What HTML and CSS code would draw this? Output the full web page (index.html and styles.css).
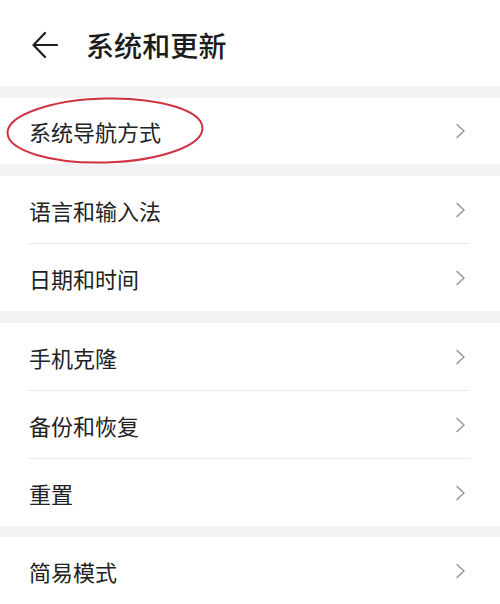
FILE: index.html
```html
<!DOCTYPE html>
<html lang="zh-CN">
<head>
<meta charset="utf-8">
<link rel="stylesheet" href="styles.css">
</head>
<body>
<div class="page">
  <header class="header">
    <svg class="back" width="26" height="28" viewBox="0 0 26 28" aria-hidden="true">
      <path d="M25 14 H2 M13 2 L1.5 14 L13 26" fill="none" stroke="#1f1f1f" stroke-width="2.2" stroke-linecap="round" stroke-linejoin="round"/>
    </svg>
    <h1 class="title">系统和更新</h1>
  </header>

  <div class="gap"></div>
  <section class="group">
    <div class="row row-short">
      <span class="label">系统导航方式</span>
      <svg class="chev" width="11" height="16" viewBox="0 0 11 16"><path d="M2 1.5 L9 8 L2 14.5" fill="none" stroke="#9a9a9a" stroke-width="1.6" stroke-linecap="round" stroke-linejoin="round"/></svg>
      <svg class="circle" width="200" height="70" viewBox="0 0 200 70" aria-hidden="true">
        <ellipse cx="100" cy="34.5" rx="97.5" ry="32" transform="rotate(-1.5 100 34.5)" fill="none" stroke="#cf3240" stroke-width="2"/>
      </svg>
    </div>
  </section>

  <div class="gap"></div>
  <section class="group">
    <div class="row">
      <span class="label">语言和输入法</span>
      <svg class="chev" width="11" height="16" viewBox="0 0 11 16"><path d="M2 1.5 L9 8 L2 14.5" fill="none" stroke="#9a9a9a" stroke-width="1.6" stroke-linecap="round" stroke-linejoin="round"/></svg>
    </div>
    <div class="divider"></div>
    <div class="row">
      <span class="label">日期和时间</span>
      <svg class="chev" width="11" height="16" viewBox="0 0 11 16"><path d="M2 1.5 L9 8 L2 14.5" fill="none" stroke="#9a9a9a" stroke-width="1.6" stroke-linecap="round" stroke-linejoin="round"/></svg>
    </div>
  </section>

  <div class="gap"></div>
  <section class="group">
    <div class="row">
      <span class="label">手机克隆</span>
      <svg class="chev" width="11" height="16" viewBox="0 0 11 16"><path d="M2 1.5 L9 8 L2 14.5" fill="none" stroke="#9a9a9a" stroke-width="1.6" stroke-linecap="round" stroke-linejoin="round"/></svg>
    </div>
    <div class="divider"></div>
    <div class="row">
      <span class="label">备份和恢复</span>
      <svg class="chev" width="11" height="16" viewBox="0 0 11 16"><path d="M2 1.5 L9 8 L2 14.5" fill="none" stroke="#9a9a9a" stroke-width="1.6" stroke-linecap="round" stroke-linejoin="round"/></svg>
    </div>
    <div class="divider"></div>
    <div class="row">
      <span class="label">重置</span>
      <svg class="chev" width="11" height="16" viewBox="0 0 11 16"><path d="M2 1.5 L9 8 L2 14.5" fill="none" stroke="#9a9a9a" stroke-width="1.6" stroke-linecap="round" stroke-linejoin="round"/></svg>
    </div>
  </section>

  <div class="gap gap-small"></div>
  <section class="group">
    <div class="row">
      <span class="label">简易模式</span>
      <svg class="chev" width="11" height="16" viewBox="0 0 11 16"><path d="M2 1.5 L9 8 L2 14.5" fill="none" stroke="#9a9a9a" stroke-width="1.6" stroke-linecap="round" stroke-linejoin="round"/></svg>
    </div>
  </section>
</div>
</body>
</html>
```

FILE: styles.css
```css
html, body {
  margin: 0;
  padding: 0;
  background: #ffffff;
}

body {
  font-family: "Noto Sans CJK SC", "Noto Sans", sans-serif;
  color: #1f1f1f;
  width: 500px;
  height: 604px;
  overflow: hidden;
}

.page {
  display: flex;
  flex-direction: column;
}

.header {
  height: 86px;
  display: flex;
  align-items: center;
  padding: 3px 0 0 32px;
  box-sizing: border-box;
}

.back {
  display: block;
}

.title {
  margin: 0 0 0 28px;
  font-size: 28px;
  font-weight: 500;
  line-height: 1;
  letter-spacing: 0.1px;
  color: #1c1c1c;
}

.gap {
  height: 12px;
  background: #f3f3f3;
}

.gap-small {
  height: 11px;
}

.group {
  background: #ffffff;
}

.row {
  position: relative;
  height: 67px;
  display: flex;
  align-items: center;
  justify-content: space-between;
  padding: 0 34px 0 29px;
}

.row-short {
  height: 66px;
}

.label {
  font-size: 22px;
  line-height: 1;
  color: #222222;
}

.chev {
  display: block;
}

.divider {
  height: 1px;
  background: #e9e9e9;
  margin: 0 30px 0 28px;
}

.circle {
  position: absolute;
  left: 5px;
  top: -2px;
  pointer-events: none;
}
```
